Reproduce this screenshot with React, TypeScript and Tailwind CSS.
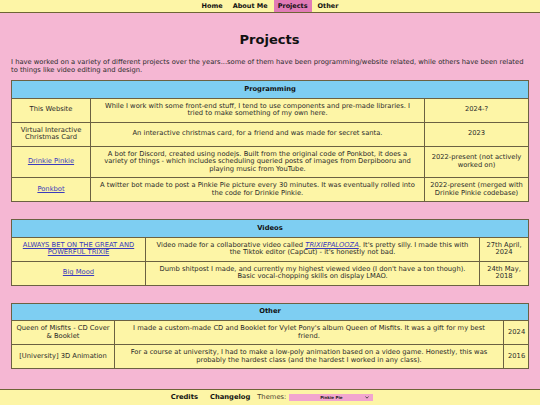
import React from "react";

const font = { fontFamily: '"DejaVu Sans", Verdana, sans-serif' };

type Cell = React.ReactNode[];
type Row = { name: Cell; desc: Cell; date: Cell };

function Link({ children, italic }: { children: React.ReactNode; italic?: boolean }) {
  return (
    <a href="#" className={"text-[#3b3bbd] underline" + (italic ? " italic" : "")}>
      {children}
    </a>
  );
}

function Lines({ lines }: { lines: Cell }) {
  return (
    <>
      {lines.map((l, i) => (
        <React.Fragment key={i}>
          {i > 0 && <br />}
          {l}
        </React.Fragment>
      ))}
    </>
  );
}

function Section({
  title,
  widths,
  rows,
}: {
  title: string;
  widths: [string, string, string];
  rows: Row[];
}) {
  const td = "border border-[#6b6142] py-[4px] px-[4px] leading-[7.5px] whitespace-nowrap";
  return (
    <table className="w-full table-fixed border-collapse border border-[#6b6142] text-center">
      <colgroup>
        <col className={widths[0]} />
        <col className={widths[1]} />
        <col className={widths[2]} />
      </colgroup>
      <thead>
        <tr>
          <th
            colSpan={3}
            className="bg-[#7ecef2] border border-[#6b6142] py-[4.5px] px-[5px] font-bold text-[#111] leading-[7.5px]"
          >
            {title}
          </th>
        </tr>
      </thead>
      <tbody>
        {rows.map((r, i) => (
          <tr key={i} className="bg-[#fdf5a6]">
            <td className={td}>
              <Lines lines={r.name} />
            </td>
            <td className={td}>
              <Lines lines={r.desc} />
            </td>
            <td className={td}>
              <Lines lines={r.date} />
            </td>
          </tr>
        ))}
      </tbody>
    </table>
  );
}

export default function App() {
  return (
    <div style={font} className="h-[405px] overflow-hidden bg-[#f5b7d3] text-[6.75px] text-[#2a2a2a] flex flex-col">
      <nav className="h-[13px] shrink-0 bg-[#fdf5a6] border-b border-[#6e6436] flex justify-center items-stretch gap-[2px]">
        {["Home", "About Me", "Projects", "Other"].map((n) => (
          <a
            key={n}
            href="#"
            className={
              "px-[4px] flex items-center font-bold text-[#111] text-[6.5px] leading-[12px] " +
              (n === "Projects" ? "bg-[#e17bb6]" : "")
            }
          >
            {n}
          </a>
        ))}
      </nav>

      <main className="pl-[11px] pr-[12px] flex flex-col">
        <h1 className="mt-[19px] text-[13px] font-bold leading-[16px] text-center text-[#111]">Projects</h1>
        <p className="mt-[10px] leading-[8px] text-[#2a2a2a]">
          I have worked on a variety of different projects over the years...some of them have been
          programming/website related, while others have been related to things like video editing and design.
        </p>

        <div className="mt-[6px]">
          <Section
            title="Programming"
            widths={["w-[79px]", "w-[334px]", "w-[104px]"]}
            rows={[
              {
                name: ["This Website"],
                desc: [
                  "While I work with some front-end stuff, I tend to use components and pre-made libraries. I",
                  "tried to make something of my own here.",
                ],
                date: ["2024-?"],
              },
              {
                name: ["Virtual Interactive", "Christmas Card"],
                desc: ["An interactive christmas card, for a friend and was made for secret santa."],
                date: ["2023"],
              },
              {
                name: [<Link>Drinkie Pinkie</Link>],
                desc: [
                  "A bot for Discord, created using nodejs. Built from the original code of Ponkbot, it does a",
                  "variety of things - which includes scheduling queried posts of images from Derpibooru and",
                  "playing music from YouTube.",
                ],
                date: ["2022-present (not actively", "worked on)"],
              },
              {
                name: [<Link>Ponkbot</Link>],
                desc: [
                  "A twitter bot made to post a Pinkie Pie picture every 30 minutes. It was eventually rolled into",
                  "the code for Drinkie Pinkie.",
                ],
                date: ["2022-present (merged with", "Drinkie Pinkie codebase)"],
              },
            ]}
          />
        </div>

        <div className="mt-[17px]">
          <Section
            title="Videos"
            widths={["w-[134px]", "w-[334px]", "w-[49px]"]}
            rows={[
              {
                name: [<Link>ALWAYS BET ON THE GREAT AND</Link>, <Link>POWERFUL TRIXIE</Link>],
                desc: [
                  <>
                    Video made for a collaborative video called <Link italic>TRIXIEPALOOZA</Link>. It's pretty
                    silly. I made this with
                  </>,
                  "the Tiktok editor (CapCut) - it's honestly not bad.",
                ],
                date: ["27th April,", "2024"],
              },
              {
                name: [<Link>Big Mood</Link>],
                desc: [
                  "Dumb shitpost I made, and currently my highest viewed video (I don't have a ton though).",
                  "Basic vocal-chopping skills on display LMAO.",
                ],
                date: ["24th May,", "2018"],
              },
            ]}
          />
        </div>

        <div className="mt-[17px]">
          <Section
            title="Other"
            widths={["w-[103px]", "w-[389px]", "w-[25px]"]}
            rows={[
              {
                name: ["Queen of Misfits - CD Cover", "& Booklet"],
                desc: [
                  "I made a custom-made CD and Booklet for Vylet Pony's album Queen of Misfits. It was a gift for my best",
                  "friend.",
                ],
                date: ["2024"],
              },
              {
                name: ["[University] 3D Animation"],
                desc: [
                  "For a course at university, I had to make a low-poly animation based on a video game. Honestly, this was",
                  "probably the hardest class (and the hardest I worked in any class).",
                ],
                date: ["2016"],
              },
            ]}
          />
        </div>
      </main>

      <footer className="mt-auto h-[16px] shrink-0 bg-[#fdf5a6] border-t border-[#6e6436] flex items-center justify-center pl-[4px]">
        <a href="#" className="font-bold text-[#111]">Credits</a>
        <a href="#" className="ml-[12px] font-bold text-[#111]">Changelog</a>
        <span className="ml-[7px] flex items-center gap-[3px] text-[#4a4030]">
          Themes:
          <span className="w-[84px] h-[7px] bg-[#f2a6cf] relative flex items-center justify-center text-[4px] font-bold text-[#222]">
            Pinkie Pie
            <svg className="absolute right-[4px] top-[2px]" width="4" height="3" viewBox="0 0 4 3">
              <path d="M0.5 0.5 L2 2.2 L3.5 0.5" fill="none" stroke="#333" strokeWidth="0.8" />
            </svg>
          </span>
        </span>
      </footer>
    </div>
  );
}
